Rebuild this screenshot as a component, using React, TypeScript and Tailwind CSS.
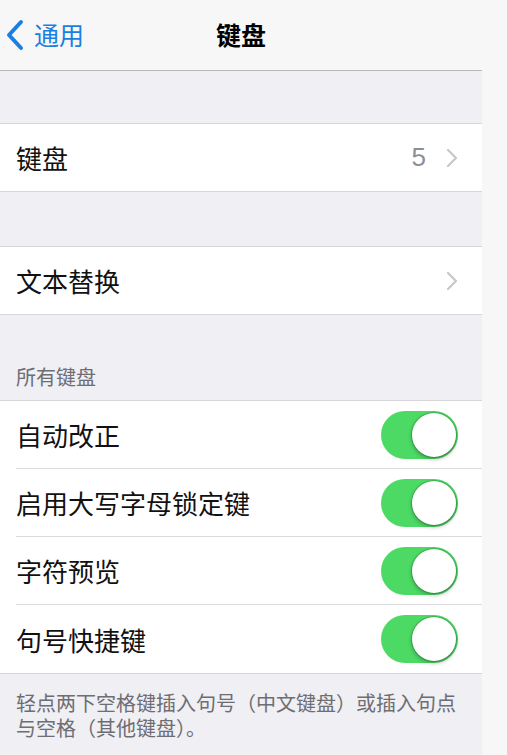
import React from 'react';

const font = { fontFamily: '"Noto Sans CJK SC", "Noto Sans", sans-serif' };

const BackChevron = () => (
  <svg width="20" height="32" viewBox="0 0 20 32" fill="none">
    <path d="M16 3 L4 16 L16 29" stroke="#1b7fe0" strokeWidth="4" strokeLinecap="round" strokeLinejoin="round" />
  </svg>
);

const Disclosure = () => (
  <svg width="12" height="20" viewBox="0 0 12 20" fill="none">
    <path d="M2 2 L10 10 L2 18" stroke="#c7c7cc" strokeWidth="2.2" strokeLinecap="round" strokeLinejoin="round" />
  </svg>
);

const Toggle = () => (
  <div className="relative w-[77px] h-[48px] rounded-full bg-[#4cd964]">
    <div className="absolute right-[2px] top-[2px] w-[44px] h-[44px] rounded-full bg-white shadow-[0_2px_4px_rgba(0,0,0,0.3),0_0_0_1px_rgba(40,120,60,0.35)]" />
  </div>
);

const NavRow = ({ label, detail }: { label: string; detail?: string }) => (
  <div className="h-[69px] bg-white border-y border-[#d6d6da] flex items-center pl-4 pr-[24px]">
    <span className="flex-1 text-[26px] text-[#111]">{label}</span>
    {detail && (
      <span className="text-[26px] text-[#8e8e93] mr-[20px]" style={{ fontFamily: '"Liberation Sans", sans-serif' }}>
        {detail}
      </span>
    )}
    <Disclosure />
  </div>
);

const toggles = ['自动改正', '启用大写字母锁定键', '字符预览', '句号快捷键'];

export default function App() {
  return (
    <div className="flex h-[755px] w-[507px] overflow-hidden bg-[#f7f7f8]" style={font}>
      <div className="w-[482px] flex flex-col bg-[#efeff4]">
        {/* navigation bar */}
        <div className="h-[71px] bg-[#f7f7f8] border-b border-[#b9b9bd] grid grid-cols-[1fr_auto_1fr] items-center">
          <div className="flex items-center pl-[5px] gap-[9px] text-[#1b7fe0] text-[25px]">
            <BackChevron />
            <span>通用</span>
          </div>
          <div className="text-[25px] font-bold text-black">键盘</div>
          <div />
        </div>

        <div className="h-[52px]" />
        <NavRow label="键盘" detail="5" />

        <div className="h-[54px]" />
        <NavRow label="文本替换" />

        <div className="h-[85px] flex items-end px-4 pb-[11px] text-[20px] leading-[24px] text-[#6d6d72]">所有键盘</div>

        <div className="bg-white border-y border-[#d6d6da]">
          {toggles.map((t, i) => (
            <div key={t} className="pl-4">
              <div className={`h-[68px] flex items-center pr-[24px] ${i < toggles.length - 1 ? 'border-b border-[#dcdce0]' : ''}`}>
                <span className="flex-1 text-[26px] text-[#111]">{t}</span>
                <Toggle />
              </div>
            </div>
          ))}
        </div>

        <p className="px-4 pt-[16px] text-[20px] leading-[25px] text-[#6d6d72]">
          轻点两下空格键插入句号（中文键盘）或插入句点与空格（其他键盘）。
        </p>
      </div>
      <div className="flex-1" />
    </div>
  );
}
